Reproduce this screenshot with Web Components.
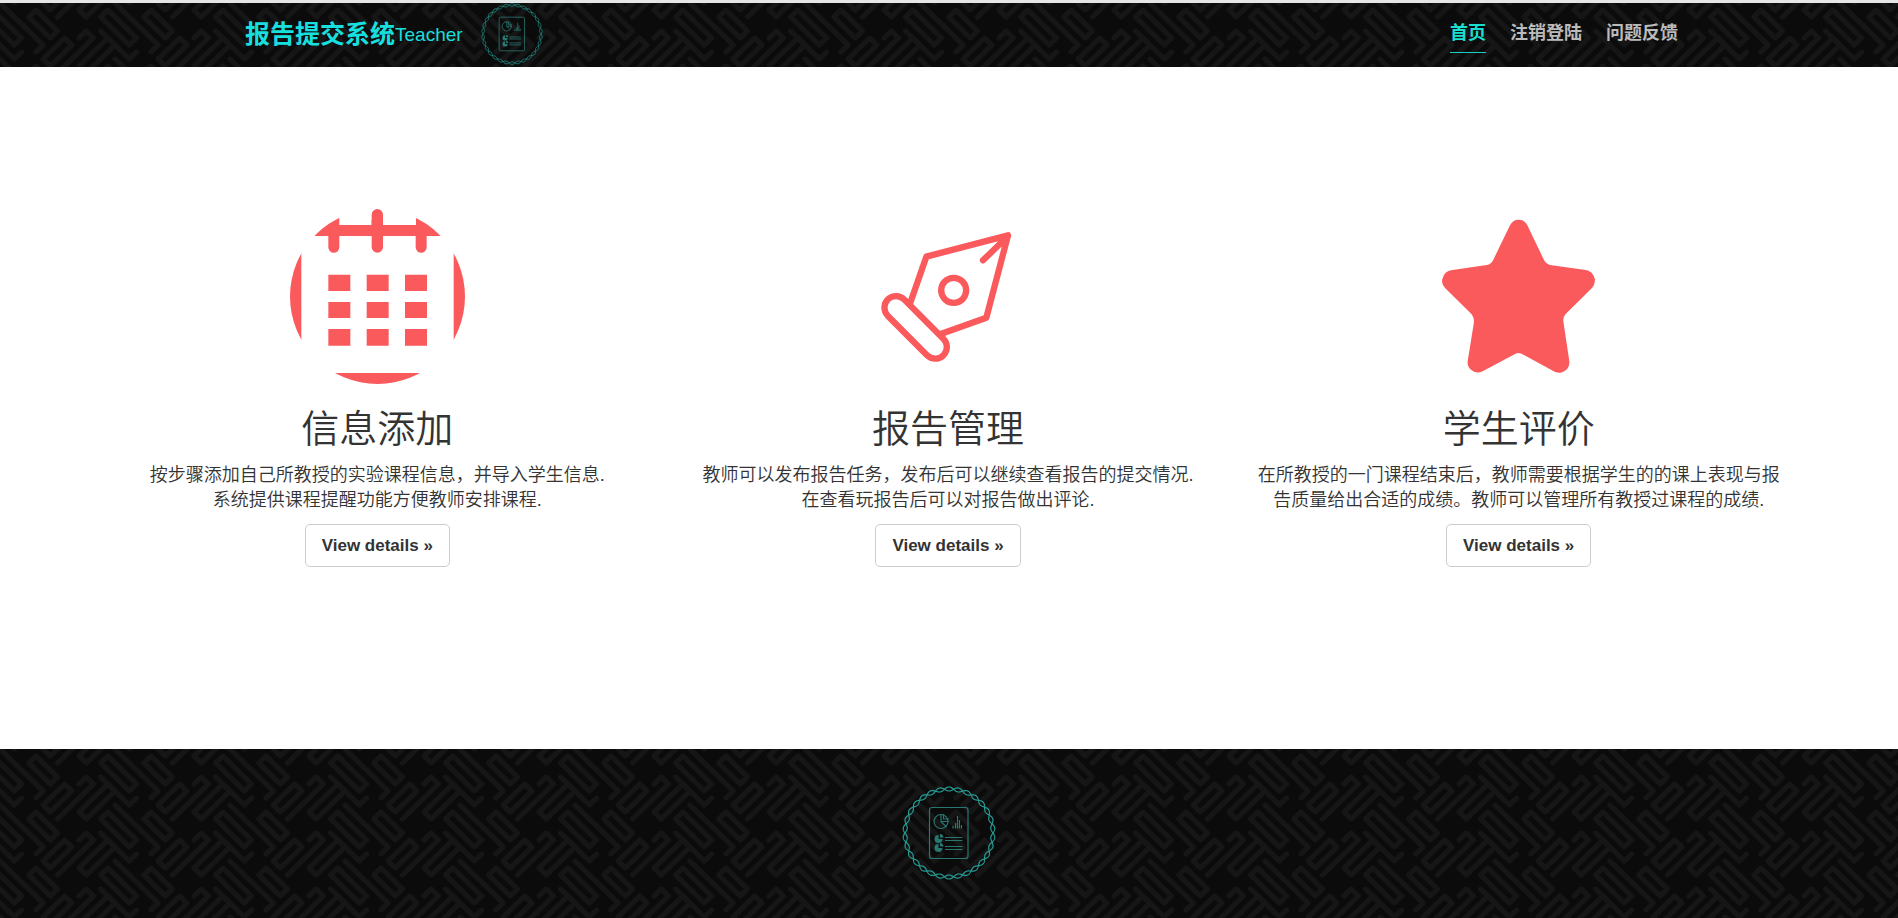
<!DOCTYPE html>
<html lang="zh-CN">
<head>
<meta charset="utf-8">
<title>报告提交系统</title>
<style>
  html { background: #fff; }
  body {
    margin: 0;
    font: 350 18px/25px "Liberation Sans", "Noto Sans CJK SC", sans-serif;
    color: #333;
  }
</style>
</head>
<body>
<report-page></report-page>

<script>
// Repeating maze texture shared by the header and the footer, on a 16 by 8 diagonal lattice.
const strokes = `
  <path d="M4 2L5 1 8 4 7 5z"/>
  <path d="M6 8L9 5 10 6 7 9z"/>
  <path d="M11 9L15 5 16 6 12 10z"/>
  <path d="M14 2L15 1 19 5 18 6z"/>
  <path d="M8 10L13 5 12 4 11 5"/>
  <path d="M0 0L6 6 5 7"/>
  <path d="M-2 -4L2 0 3 -1"/>`;
let copies = "";
for (const x of [-16, 0, 16])
  for (const y of [-8, 0, 8])
    copies += `<g transform="translate(${x} ${y})">${strokes}</g>`;
const tile = `<svg xmlns="http://www.w3.org/2000/svg" width="115" height="56" viewBox="0 0 16 8" preserveAspectRatio="none"><g fill="none" stroke="#161616" stroke-width=".7" stroke-linejoin="round" stroke-linecap="round">${copies}</g></svg>`;
document.documentElement.style.setProperty("--maze", `url("data:image/svg+xml,${encodeURIComponent(tile)}")`);

function define(name, html) {
  const template = document.createElement("template");
  template.innerHTML = html;
  customElements.define(name, class extends HTMLElement {
    constructor() {
      super();
      this.attachShadow({ mode: "open" }).append(template.content.cloneNode(true));
    }
  });
}

// Two interleaved waves running round a circle.
function wave(sign) {
  let d = "";
  for (let i = 0; i <= 720; i++) {
    const a = i * Math.PI / 360;
    const r = 44 + sign * 2 * Math.cos(15 * a);
    d += (i ? "L" : "M") + (50 + r * Math.sin(a)).toFixed(2) + " " + (50 - r * Math.cos(a)).toFixed(2);
  }
  return d + "z";
}

define("report-logo", `
  <style>
    :host { display: block; width: 100px; height: 100px; }
    svg { display: block; width: 100%; height: 100%; }
  </style>
  <svg viewBox="0 0 100 100" fill="none" stroke="#259b93" stroke-width="1.200" aria-hidden="true">
    <path d="${wave(1)}"/><path d="${wave(-1)}"/>
    <g stroke="#287770">
      <rect x="30.5" y="24.5" width="38.5" height="51" rx="2.5"/>
      <circle cx="42" cy="38.5" r="7"/>
      <path d="M42 31v7.500h7.500M42 38.500l5.500 5.500M44.500 31v5h5"/>
      <path d="M54 43v2.500M56.500 40v5.500M58.500 33v12.500M60.500 37v8.500M62.500 42v3.500"/>
      <path d="M46 54.500h17.500M46 57.500h17.500M46 63.500h17.500M46 66.500h17.500"/>
      <path fill="#287770" stroke="none" d="M39.500 52v4h4a4 4 0 1 1-4-4zM41 51a4 4 0 0 1 3.500 3.500H41zM39.500 61v4h4a4 4 0 1 1-4-4zM41 60a4 4 0 0 1 3.500 3.500H41z"/>
    </g>
  </svg>`);

define("site-header", `
  <style>
    :host {
      display: flex; justify-content: space-between; align-items: center;
      box-sizing: border-box; height: 67px; padding: 0 220px 2px 245px;
      border-top: 3px solid #e4e6e8;
      background: #0b0b0b var(--maze);
    }
    .brand { display: flex; align-items: center; color: #18dfdf; text-decoration: none; }
    strong { font-size: 25px; font-weight: 700; }
    span { font-size: 19px; }
    report-logo { width: 66px; height: 66px; margin-left: 16px; }
    nav { display: flex; gap: 24px; }
  </style>
  <a class="brand" href="#"><strong>报告提交系统</strong><span>Teacher</span><report-logo></report-logo></a>
  <nav><slot></slot></nav>`);

customElements.define("nav-item", class extends HTMLElement {
  constructor() {
    super();
    this.attachShadow({ mode: "open" }).innerHTML = `
      <style>
        :host { display: block; }
        a {
          display: block; padding: 6px 0; color: #bbb; text-decoration: none;
          font-weight: 700; border-bottom: 1px solid transparent;
        }
        :host([current]) a { color: #18dfcf; border-color: #18cfc4; }
      </style>
      <a href="#"><slot></slot></a>`;
  }
});

const ICONS = {
  calendar: `<svg viewBox="30 27 525 525">
    <clipPath id="disc"><circle cx="292.5" cy="289.5" r="262.5"/></clipPath>
    <g clip-path="url(#disc)">
      <path d="M30 27h148v48h97V60h34v15h99V27h147v81H30zM30 108h34v444H30zM521 108h34v444h-34zM30 519h525v33H30z"/>
    </g>
    <path d="M145 100h33v42a16.500 16.500 0 0 1-33 0zM407 100h33v42a16.500 16.500 0 0 1-33 0z"/>
    <rect x="275" y="27" width="34" height="131" rx="17"/>
    <path d="M145 224h66v49h-66zM260 224h66v49h-66zM375 224h66v49h-66zM145 306h66v48h-66zM260 306h66v48h-66zM375 306h66v48h-66zM145 387h66v50h-66zM260 387h66v50h-66zM375 387h66v50h-66z"/>
  </svg>`,
  pen: `<svg viewBox="0 -3 525 525"><g fill="none" stroke="#fb5a5d" stroke-width="19" stroke-linejoin="round" stroke-linecap="round">
    <path d="M151 278L199 140 444 76 379 323 242 372M442 80L369 151"/>
    <circle cx="281" cy="241" r="37.5"/>
    <path d="M83 317A34 34 0 0 1 133 269L250 386A34 34 0 0 1 201 436z"/>
  </g></svg>`,
  star: `<svg viewBox="33 27 525 525"><path d="M270 76Q278 59 296 59T322 76L371 178Q376 191 390 195L492 209Q518 210 525 238 525 256 513 267L437 342Q429 350 430 364L448 484Q450 509 423 518 413 519 404 515L310 464Q295 454 281 464L188 514Q169 523 153 509 141 498 143 484L162 366Q162 352 155 343L78 267Q63 252 67 237 73 212 98 210L200 195Q214 192 220 179Z"/></svg>`
};

customElements.define("feature-card", class extends HTMLElement {
  constructor() {
    super();
    this.attachShadow({ mode: "open" }).innerHTML = `
      <style>
        :host { display: flex; flex-direction: column; align-items: center; text-align: center; padding: 0 20px; }
        svg { display: block; width: 175px; height: 175px; fill: #fb5a5d; }
        h2 { margin: 22px 0 11px; font-size: 38px; line-height: 46px; font-weight: 350; }
        p { margin: 0 0 11px; }
        button {
          box-sizing: border-box; height: 43px; padding: 0 16px;
          font: 700 17px/25px "Liberation Sans", sans-serif; color: #333;
          background: #fff; border: 1px solid #ccc; border-radius: 5px; cursor: pointer;
        }
      </style>
      ${ICONS[this.getAttribute("icon")]}
      <h2><slot name="title"></slot></h2>
      <p><slot></slot></p>
      <button type="button">View details »</button>`;
  }
});

define("feature-row", `
  <style>
    :host { display: grid; grid-template-columns: repeat(3, 1fr); align-content: start; padding: 142px 94px 142px 92px; }
  </style>
  <slot></slot>`);

define("site-footer", `
  <style>
    :host { display: flex; justify-content: center; box-sizing: border-box; height: 169px; padding-top: 34px; background: #0b0b0b var(--maze); }
  </style>
  <report-logo></report-logo>`);

define("report-page", `
  <style>
    :host { display: grid; grid-template-rows: auto 1fr auto; min-height: 100vh; }
  </style>
  <site-header>
    <nav-item current>首页</nav-item>
    <nav-item>注销登陆</nav-item>
    <nav-item>问题反馈</nav-item>
  </site-header>
  <feature-row>
    <feature-card icon="calendar"><span slot="title">信息添加</span>按步骤添加自己所教授的实验课程信息，并导入学生信息.<br>系统提供课程提醒功能方便教师安排课程.</feature-card>
    <feature-card icon="pen"><span slot="title">报告管理</span>教师可以发布报告任务，发布后可以继续查看报告的提交情况.<br>在查看玩报告后可以对报告做出评论.</feature-card>
    <feature-card icon="star"><span slot="title">学生评价</span>在所教授的一门课程结束后，教师需要根据学生的的课上表现与报告质量给出合适的成绩。教师可以管理所有教授过课程的成绩.</feature-card>
  </feature-row>
  <site-footer></site-footer>`);
</script>
</body>
</html>
